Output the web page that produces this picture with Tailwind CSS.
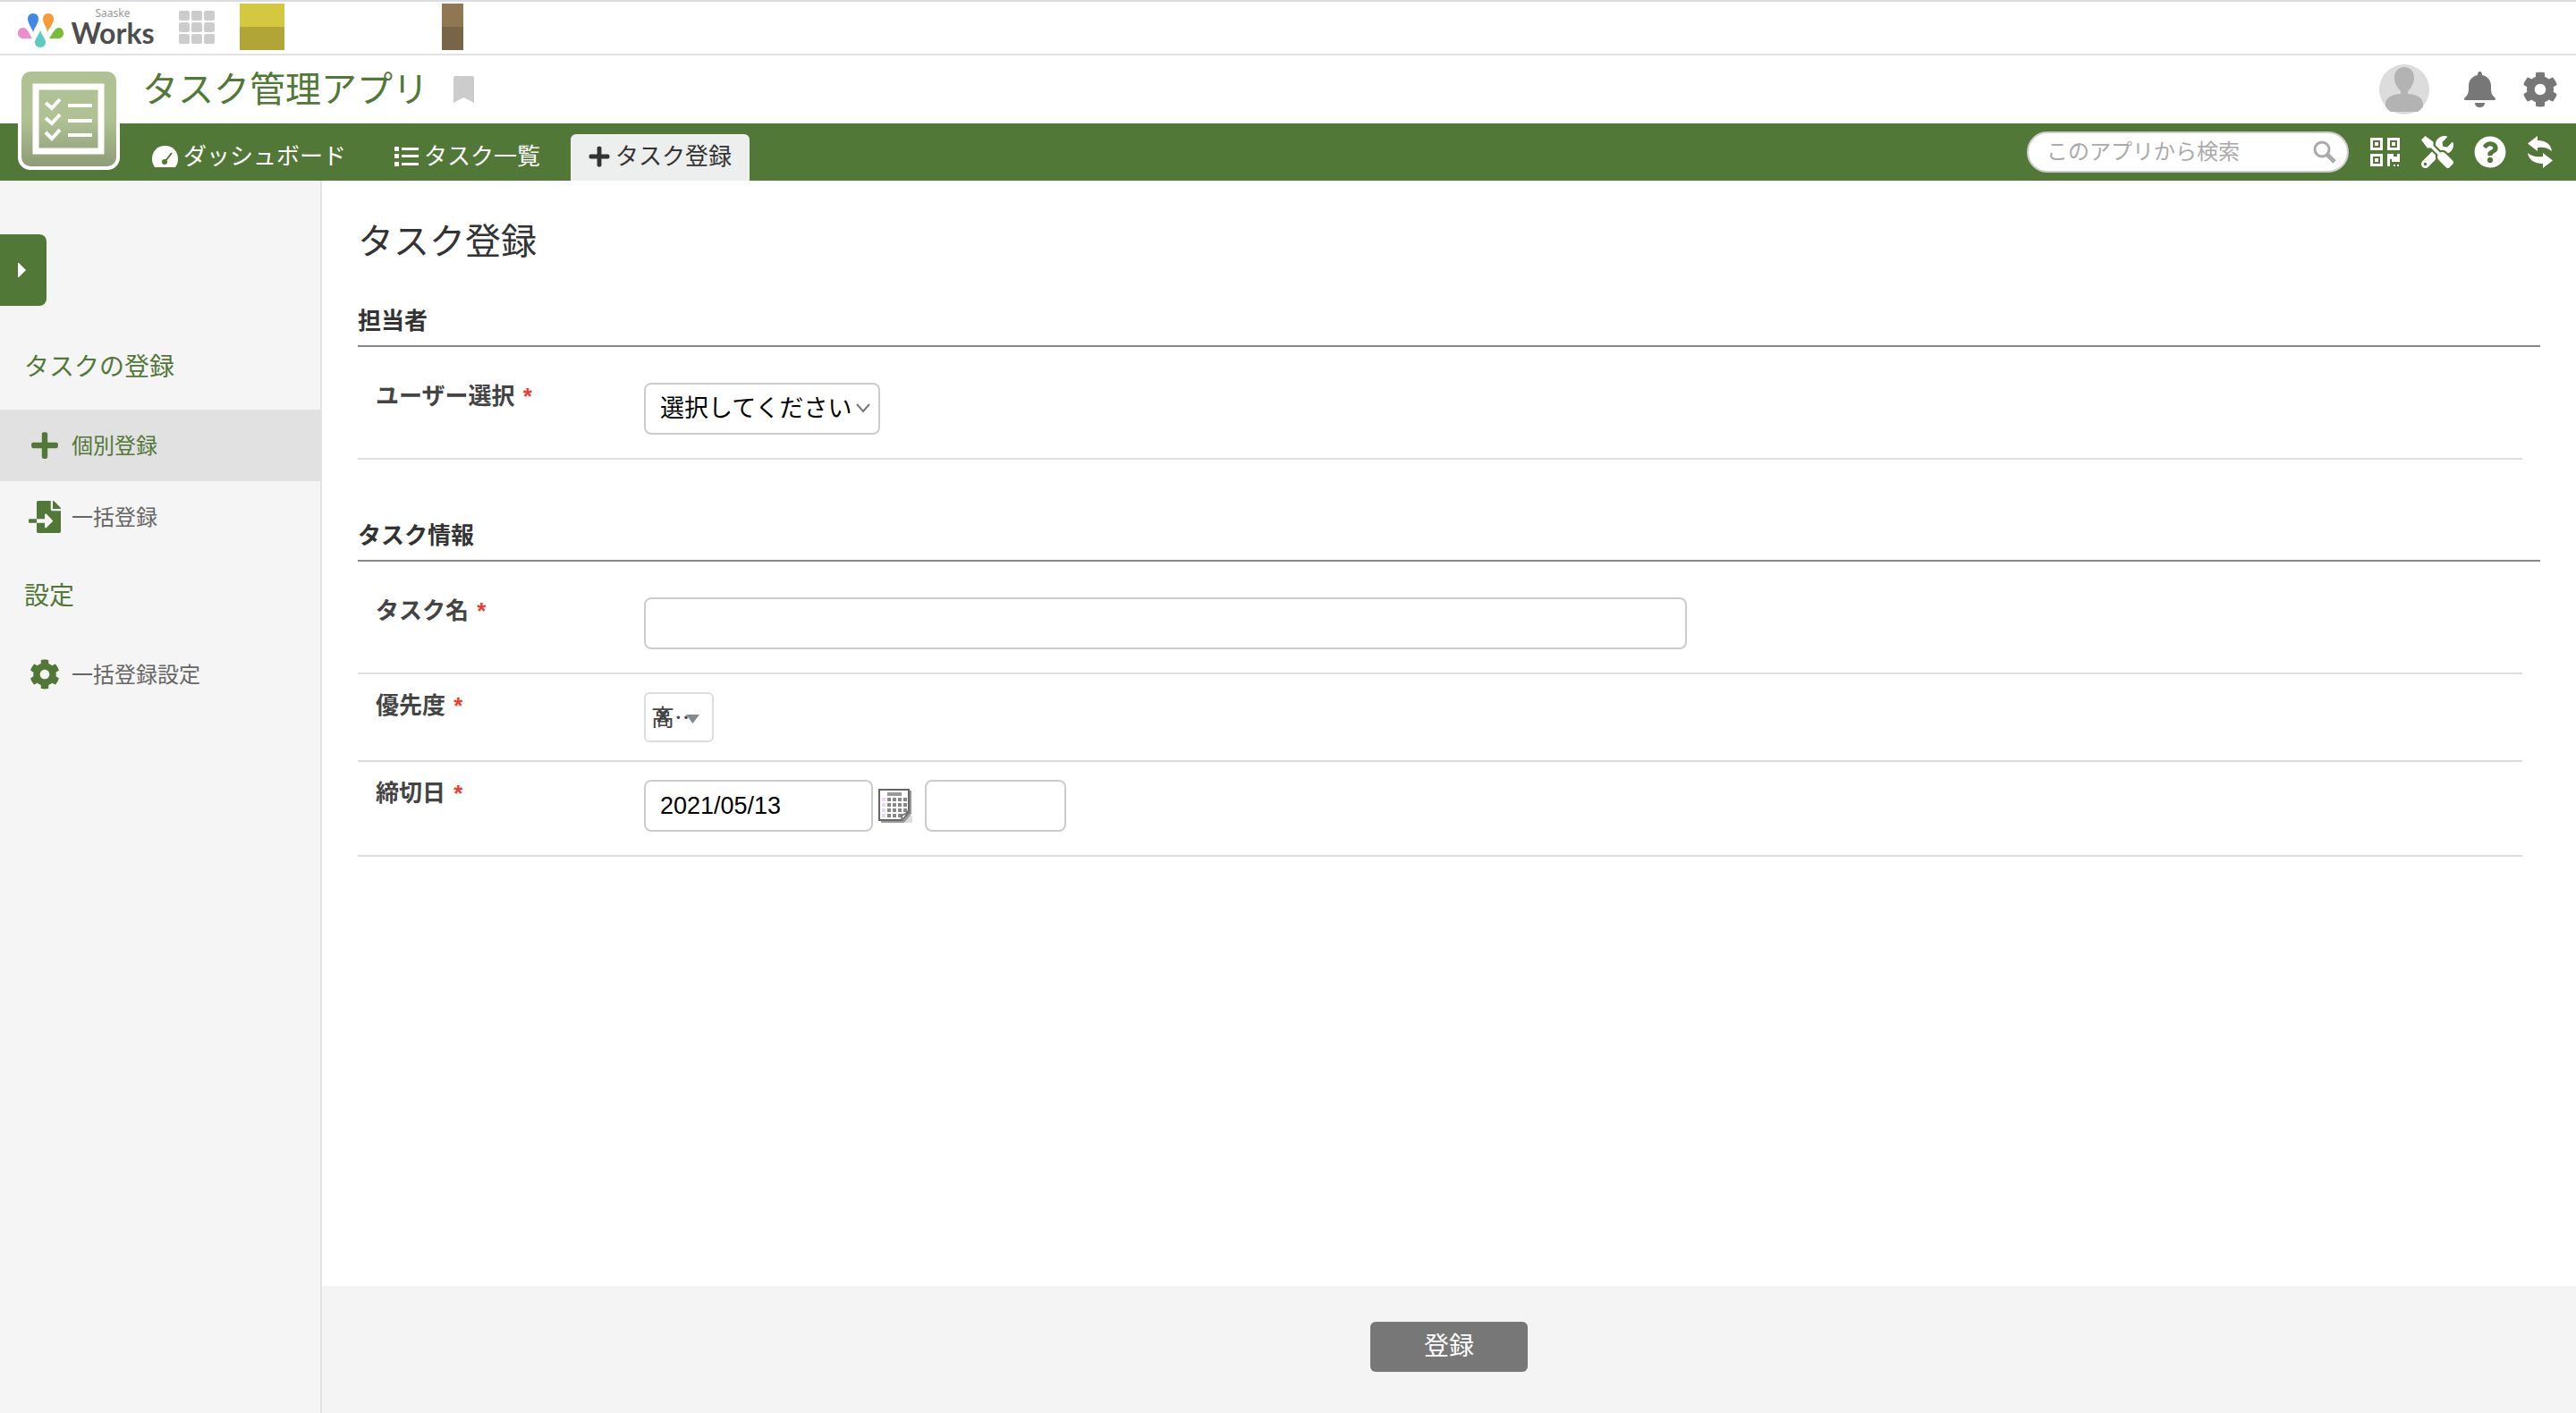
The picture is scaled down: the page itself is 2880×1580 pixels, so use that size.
<!DOCTYPE html>
<html lang="ja">
<head>
    <meta charset="UTF-8">
    <meta name="viewport" content="width=device-width, initial-scale=1.0">
    <title>タスク登録 - タスク管理アプリ</title>
    <script src="https://cdn.jsdelivr.net/npm/@tailwindcss/browser@4"></script>
</head>
<body class="min-h-screen flex flex-col bg-white text-[#333] font-['Liberation_Sans','Noto_Sans_CJK_JP',sans-serif]">
    <!-- Icons -->
    <svg class="hidden">
        <symbol id="plus" viewBox="0 0 448 512"><path d="M416 208H272V64c0-17.67-14.33-32-32-32h-32c-17.67 0-32 14.33-32 32v144H32c-17.67 0-32 14.33-32 32v32c0 17.67 14.33 32 32 32h144v144c0 17.67 14.33 32 32 32h32c17.67 0 32-14.33 32-32V304h144c17.67 0 32-14.33 32-32v-32c0-17.67-14.33-32-32-32z"/></symbol>
        <symbol id="cog" viewBox="0 0 512 512"><path d="M487.4 315.7l-42.6-24.6c4.3-23.2 4.3-47 0-70.2l42.6-24.6c4.9-2.8 7.1-8.6 5.5-14-11.1-35.6-30-67.8-54.7-94.6-3.8-4.1-10-5.1-14.8-2.3L380.8 110c-17.9-15.4-38.5-27.3-60.8-35.1V25.8c0-5.6-3.9-10.5-9.4-11.7-36.7-8.2-74.3-7.8-109.2 0-5.5 1.2-9.4 6.1-9.4 11.7V75c-22.2 7.9-42.8 19.8-60.8 35.1L88.7 85.5c-4.9-2.8-11-1.9-14.8 2.3-24.7 26.7-43.6 58.9-54.7 94.6-1.7 5.4.6 11.2 5.5 14L67.3 221c-4.3 23.2-4.3 47 0 70.2l-42.6 24.6c-4.9 2.8-7.1 8.6-5.5 14 11.1 35.6 30 67.8 54.7 94.6 3.8 4.1 10 5.1 14.8 2.3l42.6-24.6c17.9 15.4 38.5 27.3 60.8 35.1v49.2c0 5.6 3.9 10.5 9.4 11.7 36.7 8.2 74.3 7.8 109.2 0 5.5-1.2 9.4-6.1 9.4-11.7v-49.2c22.2-7.9 42.8-19.8 60.8-35.1l42.6 24.6c4.9 2.8 11 1.9 14.8-2.3 24.7-26.7 43.6-58.9 54.7-94.6 1.5-5.5-.7-11.3-5.6-14.1zM256 336c-44.1 0-80-35.9-80-80s35.9-80 80-80 80 35.9 80 80-35.9 80-80 80z"/></symbol>
    </svg>

    <!-- Top bar -->
    <div class="h-[62px] flex items-center border-t-2 border-t-[#dcdce0] border-b-2 border-b-[#e1e1e1] pl-5 pb-0.5">
        <a href="#" class="flex items-center" aria-label="Saaske Works">
            <svg class="w-[51px] h-[38px] mt-2" viewBox="0 0 51 38">
                <path fill="#3f8ae8" d="M17 0c-4 0-6 3-6 6 0 5 4 9 6 15 2-6 6-10 6-15 0-3-2-6-6-6z"/>
                <path fill="#f59c36" d="M34 0c-4 0-6 3-6 6 0 5 4 9 5 15 3-6 7-10 7-15 0-3-2-6-6-6z"/>
                <path fill="#ee8dcc" d="M16 28c-3-4-5-12-10-12-4 0-6 3-6 6 0 4 3 6 6 6z"/>
                <path fill="#77bd38" d="M35 28c3-4 6-12 11-12 3 0 5 3 5 6 0 4-3 6-6 6z"/>
                <path fill="#5ccbc0" d="M25 18c-1 6-6 10-6 14 0 3 2 6 6 6s6-3 6-6c0-4-5-8-6-14z"/>
            </svg>
            <span class="flex flex-col items-center ml-[9px] w-[92px] pt-0.5">
                <span class="text-[12px] leading-3 text-[#999] font-['Noto_Sans',sans-serif]">Saaske</span>
                <span class="text-[32px] leading-8 font-bold text-[#4d4d4d] font-['Lato',sans-serif]">Works</span>
            </span>
        </a>
        <button type="button" class="grid grid-cols-3 gap-[2px] ml-7" aria-label="アプリ一覧">
            <span class="w-3 h-[11px] rounded-[2px] bg-[#ccc]"></span><span class="w-3 h-[11px] rounded-[2px] bg-[#ccc]"></span><span class="w-3 h-[11px] rounded-[2px] bg-[#ccc]"></span>
            <span class="w-3 h-[11px] rounded-[2px] bg-[#ccc]"></span><span class="w-3 h-[11px] rounded-[2px] bg-[#ccc]"></span><span class="w-3 h-[11px] rounded-[2px] bg-[#ccc]"></span>
            <span class="w-3 h-[11px] rounded-[2px] bg-[#ccc]"></span><span class="w-3 h-[11px] rounded-[2px] bg-[#ccc]"></span><span class="w-3 h-[11px] rounded-[2px] bg-[#ccc]"></span>
        </button>
        <div class="w-[50px] h-[52px] ml-7 bg-linear-to-b from-[#d4c840] from-50% to-[#b0a536] to-50%"></div>
        <div class="w-6 h-[52px] ml-44 bg-linear-to-b from-[#8f7752] from-50% to-[#786446] to-50%"></div>
    </div>

    <!-- App header -->
    <header class="relative">
        <a href="#" class="absolute left-5 top-[14px] w-[114px] h-[114px] rounded-[14px] border-4 border-white bg-linear-to-b from-[#b0c294] from-50% to-[#8f9c78]" aria-label="タスク管理アプリ">
            <svg class="w-full h-full" viewBox="0 0 106 106" fill="none" stroke="#fff">
                <path stroke-width="7" d="M16 17h73v72H16z"/>
                <path stroke-width="4" d="M52 38h27M52 55h27M52 71h27"/>
                <path stroke-width="4" d="M27 35l7 6 9-10M27 52l7 6 9-10M27 68l7 7 9-10"/>
            </svg>
        </a>
        <div class="h-19 flex items-center pl-[159px] pr-5">
            <h1 class="text-[40px] leading-12 text-[#527838]">タスク管理アプリ</h1>
            <button type="button" class="ml-7" aria-label="ブックマーク">
                <svg class="w-[23px] h-[30px]" viewBox="0 0 23 30" fill="#ccc"><path d="M2 0h19q2 0 2 2v28l-11.500-6L0 30V2q0-2 2-2z"/></svg>
            </button>
            <div class="ml-auto flex items-center">
                <a href="#" aria-label="プロフィール">
                    <svg class="w-14 h-14" viewBox="0 0 56 56">
                        <circle cx="28" cy="28" r="28" fill="#dcdcdc"/>
                        <path fill="#b3b3b3" d="M28 3c7 0 11 5 11 12 0 6-3 11-7 15v3c9 0 17 4 17 11v3c-2 3-4 5-6 6H13c-2-1-4-3-6-6v-3c0-7 8-11 17-11v-3c-4-4-7-9-7-15 0-7 4-12 11-12z"/>
                    </svg>
                </a>
                <button type="button" class="ml-[39px]" aria-label="通知">
                    <svg class="w-[35px] h-10" viewBox="0 0 35 40" fill="#777"><path d="M17.500 0c2 0 2.500 2 2.500 4 6 1 10 6 10 12 0 7 0 9 4 13 2 2 1 3-1 3H2c-2 0-3-1-1-3 4-4 4-6 4-13C5 10 9 5 15 4c0-2 .5-4 2.500-4zM12 35h11c0 3-2 5-5.500 5S12 38 12 35z"/></svg>
                </button>
                <button type="button" class="ml-[30px] text-[#777]" aria-label="設定">
                    <svg class="w-10 h-10" fill="currentColor"><use href="#cog"/></svg>
                </button>
            </div>
        </div>
        <nav class="h-16 pl-[170px] pr-[26px] flex items-end bg-[#527838] text-[26px] leading-[50px] text-white">
            <a href="#" class="flex items-center gap-[6px] pb-0.5">
                <svg class="w-[29px] h-6" viewBox="0 0 29 24" fill="#fff"><path d="M3 24C1 21 0 18 0 15 0 6 6 0 14.500 0S29 6 29 15c0 3-1 6-3 9z"/><path stroke="#527838" stroke-width="2" d="M15 17l7-9"/><circle cx="14" cy="18" r="3" fill="#527838"/></svg>
                ダッシュボード
            </a>
            <a href="#" class="flex items-center gap-[6px] ml-[54px] pb-0.5">
                <svg class="w-[27px] h-[22px]" viewBox="0 0 27 22" fill="#fff"><path d="M0 0h5v5H0zM0 8h5v5H0zM0 17h5v5H0zM8 1h19v3H8zM8 9h19v3H8zM8 18h19v3H8z"/></svg>
                タスク一覧
            </a>
            <a href="#" class="flex items-center gap-[6px] ml-[34px] px-5 pb-0.5 rounded-t-md bg-[#edeeee] text-[#333]">
                <svg class="w-6 h-[26px]" fill="currentColor"><use href="#plus"/></svg>
                タスク登録
            </a>
            <div class="ml-auto self-center flex items-center">
                <form class="w-[360px] h-[46px] flex items-center rounded-full border-2 border-[#ccc] bg-white pl-5 pr-3">
                    <input type="search" placeholder="このアプリから検索" aria-label="このアプリから検索" class="flex-1 min-w-0 text-[24px] leading-8 placeholder:text-[#aaa] outline-none">
                    <button type="submit" aria-label="検索">
                        <svg class="w-[26px] h-[26px]" viewBox="0 0 26 26" fill="none" stroke="#aaa"><circle cx="10" cy="10" r="8" stroke-width="3"/><path stroke-width="5" d="M16 16l8 8"/></svg>
                    </button>
                </form>
                <button type="button" class="ml-6" aria-label="QRコード">
                    <svg class="w-[33px] h-8" viewBox="0 0 33 32" fill="#fff"><path fill-rule="evenodd" d="M0 0h14v14H0zM3 3v8h8V3zM5 5h4v4H5zM19 0h14v14H19zM22 3v8h8V3zM24 5h4v4h-4zM0 18h14v14H0zM3 21v8h8v-8zM5 23h4v4H5zM19 18h7v3h4v-3h3v9h-9v-3h-2v8h-3zM26 30h2v2h-2zM30 30h2v2h-2z"/></svg>
                </button>
                <button type="button" class="ml-6" aria-label="ツール">
                    <svg class="w-9 h-9" viewBox="0 0 512 512" fill="#fff"><path d="M501.100 395.700L384 278.600c-23.100-23.100-57.600-27.600-85.400-13.900L192 158.100V96L64 0 0 64l96 128h62.100l106.600 106.600c-13.600 27.800-9.200 62.300 13.900 85.400l117.100 117.100c14.600 14.600 38.200 14.600 52.700 0l52.700-52.700c14.500-14.600 14.500-38.200 0-52.700zM331.700 225c28.300 0 54.900 11 74.900 31l19.400 19.400c15.800-6.900 30.800-16.500 43.800-29.500 37.100-37.100 49.700-89.300 37.900-136.700-2.200-9-13.500-12.100-20.100-5.500l-74.400 74.400-67.900-11.300L334 98.900l74.400-74.400c6.600-6.600 3.400-17.900-5.700-20.200-47.400-11.700-99.600.9-136.600 37.900-28.500 28.500-41.900 66.100-41.200 103.600l82.100 82.100c8.100-1.900 16.500-2.900 24.700-2.900zm-103.900 82l-56.700-56.700L18.700 402.800c-25 25-25 65.500 0 90.500s65.500 25 90.500 0l123.600-123.600c-7.600-19.900-9.900-41.600-5-62.700zM64 472c-13.200 0-24-10.800-24-24 0-13.300 10.700-24 24-24s24 10.700 24 24c0 13.200-10.700 24-24 24z"/></svg>
                </button>
                <button type="button" class="ml-[23px]" aria-label="ヘルプ">
                    <svg class="w-9 h-9" viewBox="0 0 512 512" fill="#fff"><path d="M504 256c0 136.997-111.043 248-248 248S8 392.997 8 256C8 119.083 119.043 8 256 8s248 111.083 248 248zM262.655 90c-54.497 0-89.255 22.957-116.549 63.758-3.536 5.286-2.353 12.415 2.715 16.258l34.699 26.310c5.205 3.947 12.621 3.008 16.665-2.122 17.864-22.658 30.113-35.797 57.303-35.797 20.429 0 45.698 13.148 45.698 32.958 0 14.976-12.363 22.667-32.534 33.976C247.128 238.528 216 254.941 216 296v4c0 6.627 5.373 12 12 12h56c6.627 0 12-5.373 12-12v-1.333c0-28.462 83.186-29.647 83.186-106.667 0-58.002-60.165-102-116.531-102zM256 338c-25.365 0-46 20.635-46 46 0 25.364 20.635 46 46 46s46-20.636 46-46c0-25.364-20.635-46-46-46z"/></svg>
                </button>
                <button type="button" class="ml-6" aria-label="更新">
                    <svg class="w-7 h-9" viewBox="0 0 28 36" fill="#fff"><path d="M0 8.500L11 0v5c9 0 15 4 16 12-5-4-9-5-16-4v4zM28 27.500L17 36v-5C8 31 1 27 0 19c5 4 10 5 17 4v-4z"/></svg>
                </button>
            </div>
        </nav>
    </header>

    <div class="flex-1 flex">
        <!-- Side menu -->
        <aside class="w-[360px] shrink-0 bg-[#f5f5f5] border-r-2 border-[#e3e3e3] pt-15">
            <button type="button" class="w-[52px] h-20 flex items-center pl-5 rounded-r-lg bg-[#527838]" aria-label="メニューを開く">
                <svg class="w-[9px] h-4" viewBox="0 0 9 16" fill="#fff"><path d="M0 0h1l8 8-8 8H0z"/></svg>
            </button>
            <h2 class="mt-9 pl-[27px] pt-0.5 text-[28px] leading-[62px] text-[#527838]">タスクの登録</h2>
            <a href="#" class="mt-4 h-20 flex items-center pl-8 gap-3 text-[24px] bg-[#e1e1e1] text-[#527838]">
                <svg class="w-9 h-[34px]" fill="currentColor"><use href="#plus"/></svg>
                <span class="pt-0.5">個別登録</span>
            </a>
            <a href="#" class="h-20 flex items-center pl-8 gap-3 text-[24px] text-[#666]">
                <svg class="w-9 h-9" viewBox="0 0 512 512" fill="#527838"><path d="M16 288c-8.800 0-16 7.200-16 16v32c0 8.800 7.200 16 16 16h112v-64zm489-183L407.100 7c-4.500-4.500-10.600-7-17-7H384v128h128v-6.100c0-6.300-2.500-12.400-7-16.900zm-153 31V0H152c-13.300 0-24 10.700-24 24v264h128v-65.200c0-14.300 17.300-21.400 27.400-11.300L379 308c6.600 6.700 6.600 17.400 0 24l-95.700 96.400c-10.100 10.100-27.400 3-27.400-11.300V352H128v136c0 13.300 10.700 24 24 24h336c13.300 0 24-10.700 24-24V160H376c-13.200 0-24-10.800-24-24z"/></svg>
                <span class="pt-0.5">一括登録</span>
            </a>
            <h2 class="mt-4 pl-[27px] pt-0.5 text-[28px] leading-[62px] text-[#527838]">設定</h2>
            <a href="#" class="mt-4 h-20 flex items-center pl-8 gap-3 text-[24px] text-[#666]">
                <svg class="w-9 h-[34px] text-[#527838]" fill="currentColor"><use href="#cog"/></svg>
                <span class="pt-0.5">一括登録設定</span>
            </a>
        </aside>

        <!-- Task form -->
        <form class="flex-1 min-w-0 flex flex-col">
            <main class="flex-1 px-10 pt-9">
                <h2 class="text-[40px] leading-16">タスク登録</h2>

                <section class="mt-[39px]">
                    <h3 class="pb-[9px] text-[26px] leading-9 font-bold border-b-2 border-[#888]">担当者</h3>
                    <div class="mr-5 flex pt-10 pb-[26px] pl-5 border-b-2 border-[#ddd]">
                        <label for="user" class="w-[300px] h-7 text-[26px] leading-[30px] font-bold text-[#444]">ユーザー選択 <span class="ml-0.5 text-[#f03c2d]">*</span></label>
                        <div class="relative">
                            <select id="user" class="block appearance-none w-66 h-[58px] pl-4 rounded-lg border-2 border-[#ccc] bg-white text-[27px] text-black">
                                <option>選択してください</option>
                            </select>
                            <svg class="absolute right-[11px] top-[23px] w-4 h-[11px] pointer-events-none" viewBox="0 0 16 11" fill="none" stroke="#777" stroke-width="2"><path d="M1 1l7 8 7-8"/></svg>
                        </div>
                    </div>
                </section>

                <section class="mt-[67px]">
                    <h3 class="pb-[9px] text-[26px] leading-9 font-bold border-b-2 border-[#888]">タスク情報</h3>
                    <div class="mr-5 flex pt-10 pb-[26px] pl-5 border-b-2 border-[#ddd]">
                        <label for="name" class="w-[300px] h-7 text-[26px] leading-[30px] font-bold text-[#444]">タスク名 <span class="ml-0.5 text-[#f03c2d]">*</span></label>
                        <input id="name" type="text" class="w-[1166px] h-[58px] px-4 rounded-lg border-2 border-[#ccc] text-[27px] text-black">
                    </div>
                    <div class="mr-5 flex py-5 pl-5 border-b-2 border-[#ddd]">
                        <label for="priority" class="w-[300px] h-7 text-[26px] leading-[30px] font-bold text-[#444]">優先度 <span class="ml-0.5 text-[#f03c2d]">*</span></label>
                        <div class="relative">
                            <select id="priority" class="block appearance-none w-[78px] h-14 pl-[6px] pb-1 rounded-md border-2 border-[#ddd] bg-white text-[26px] text-[#444] font-['Noto_Sans_CJK_JP',sans-serif]">
                                <option>高…</option>
                            </select>
                            <button type="button" class="absolute left-[14px] top-[10px] text-[26px] leading-7 font-bold text-[#444]" aria-label="クリア">x</button>
                            <svg class="absolute right-4 top-[25px] w-[15px] h-[10px] pointer-events-none" viewBox="0 0 15 10" fill="#888"><path d="M0 0h15l-7.500 10z"/></svg>
                        </div>
                    </div>
                    <div class="mr-5 flex pt-5 pb-[26px] pl-5 border-b-2 border-[#ddd]">
                        <label for="date" class="w-[300px] h-7 text-[26px] leading-[30px] font-bold text-[#444]">締切日 <span class="ml-0.5 text-[#f03c2d]">*</span></label>
                        <div class="flex items-center">
                            <input id="date" type="text" value="2021/05/13" class="w-64 h-[58px] px-4 rounded-lg border-2 border-[#ccc] text-[27px] text-black">
                            <button type="button" class="ml-[6px]" aria-label="カレンダー">
                                <svg class="w-[38px] h-[38px]" viewBox="0 0 38 38">
                                    <path fill="#ddd" d="M30 30h8v8h-8z"/>
                                    <path fill="#999" d="M3 2h34v26l-8 10H3z"/>
                                    <path fill="#fff" stroke="#666" stroke-width="2" d="M1 1h33v25l-8 9H1z"/>
                                    <path fill="#999" d="M10 4h16v4H10z"/>
                                    <path stroke="#ead6f0" stroke-width="4" stroke-dasharray="4 2" d="M6 10v22"/>
                                    <path stroke="#888" stroke-width="4" stroke-dasharray="4 2" d="M12 10v22M18 10v22M24 10v22M30 10v16"/>
                                    <path fill="#fff" stroke="#777" stroke-width="2" d="M26 35c1-3 0-5-1-6 3 1 6-1 9-5"/>
                                </svg>
                            </button>
                            <input type="text" aria-label="時刻" class="ml-[14px] w-[158px] h-[58px] px-4 rounded-lg border-2 border-[#ccc] text-[27px] text-black">
                        </div>
                    </div>
                </section>
            </main>
            <footer class="flex justify-center pt-10 pb-[46px] bg-[#f4f4f4]">
                <button type="submit" class="w-44 h-14 rounded-md bg-[#777] text-white text-[28px] leading-8">登録</button>
            </footer>
        </form>
    </div>
</body>
</html>
